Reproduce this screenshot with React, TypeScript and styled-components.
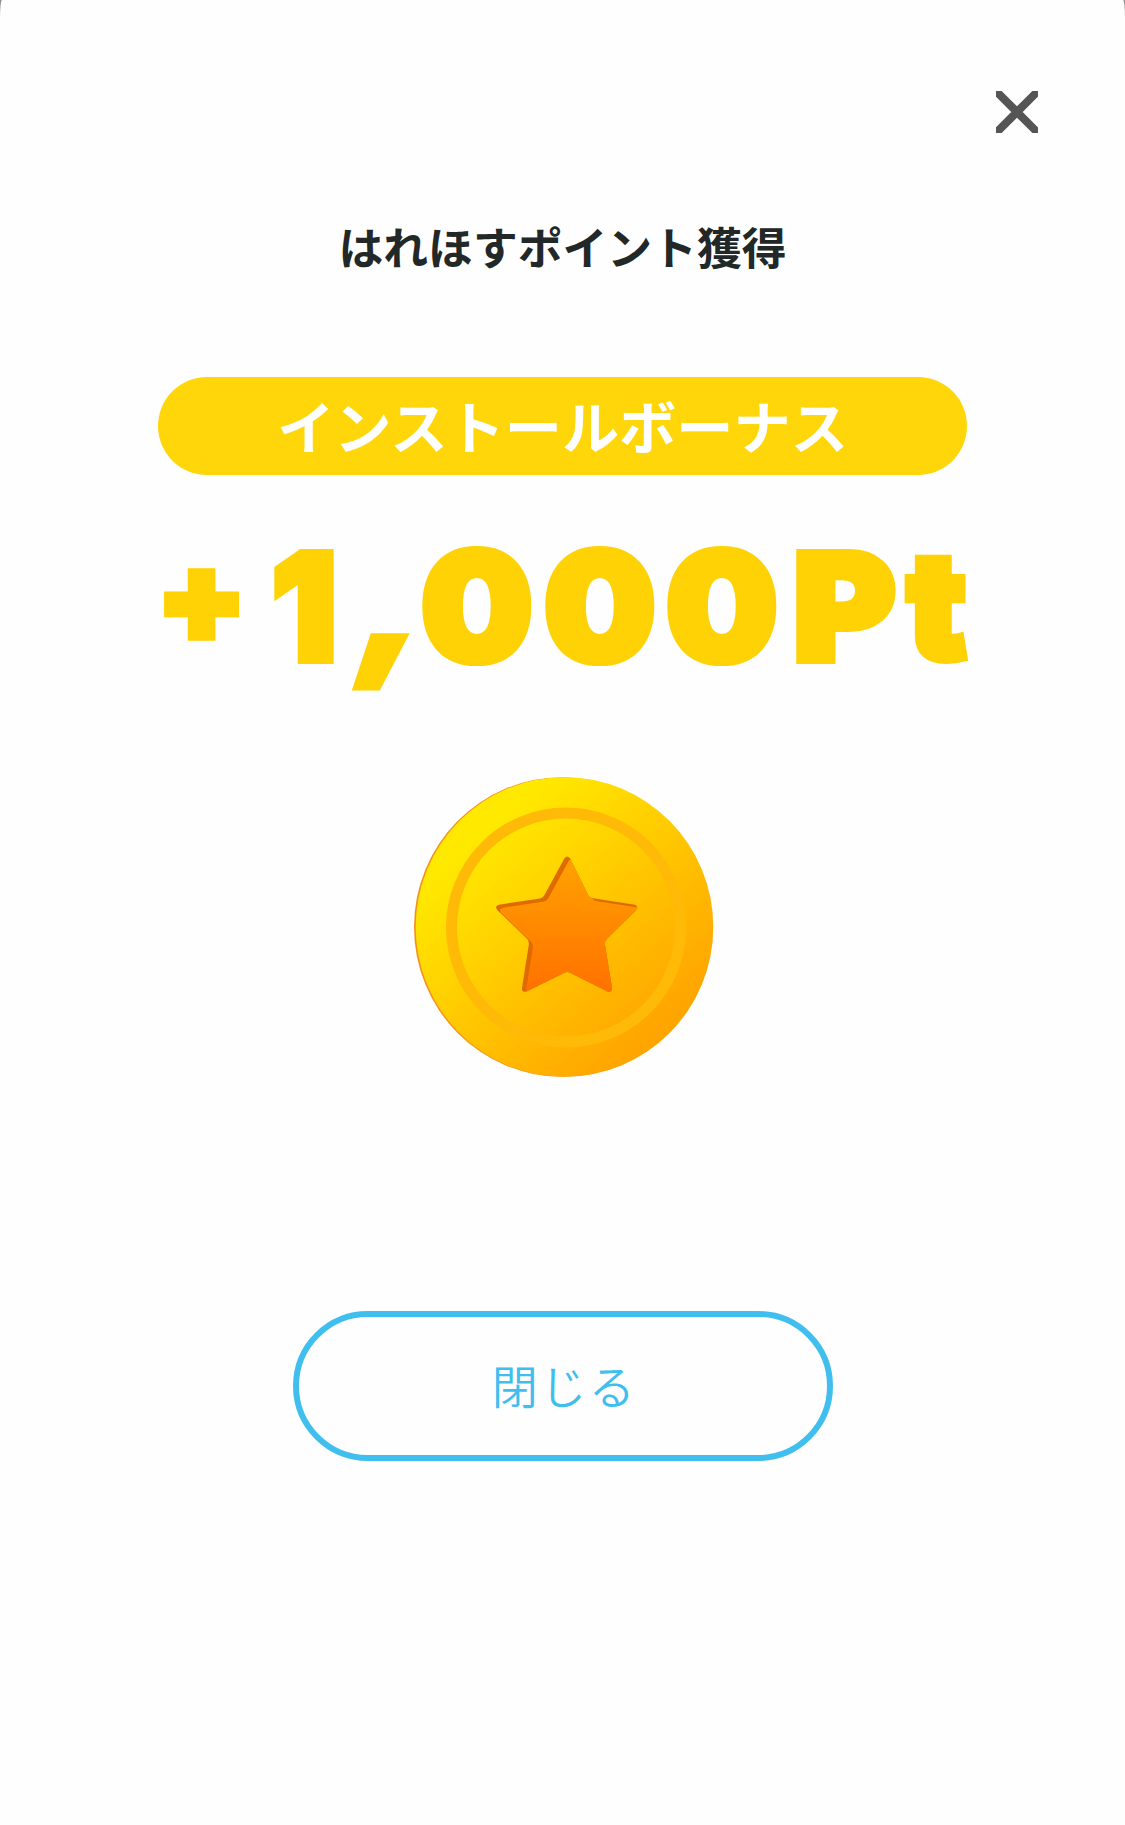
import React from "react";
import styled, { createGlobalStyle } from "styled-components";

const GlobalStyle = createGlobalStyle`
  body { margin: 0; background: #8c8c8c; }
  * { box-sizing: border-box; }
`;

const Sheet = styled.main`
  display: flex;
  flex-direction: column;
  align-items: center;
  width: 1125px;
  height: 1825px;
  overflow: hidden;
  background: #fefefe;
  border-radius: 2px 2px 0 0 / 18px 18px 0 0;
  font-family: "Noto Sans CJK JP", sans-serif;
`;

const Header = styled.header`
  display: flex;
  justify-content: flex-end;
  width: 100%;
  padding: 91px 87px 0 0;
`;

const CloseIconButton = styled.button`
  display: block;
  width: 42px;
  height: 42px;
  padding: 0;
  border: 0;
  background: none;
  svg { display: block; }
`;

const Title = styled.h1`
  margin: 81px 0 0;
  height: 64px;
  line-height: 64px;
  font-size: 44.8px;
  font-weight: 700;
  color: #222827;
  white-space: nowrap;
`;

const BonusLabel = styled.div`
  display: flex;
  align-items: center;
  justify-content: center;
  width: 809px;
  height: 98px;
  margin-top: 99px;
  border-radius: 49px;
  background: #ffd60a;
  color: #fff;
  font-size: 57.2px;
  font-weight: 700;
  line-height: 94px;
  padding-bottom: 4px;
  white-space: nowrap;
`;

const Points = styled.div`
  display: flex;
  width: 809px;
  height: 160px;
  margin-top: 52px;
  font-family: Inter, sans-serif;
  font-weight: 900;
  font-size: 147px;
  line-height: 160px;
  color: #ffd205;
  -webkit-text-stroke: 8px #ffd205;
`;

const Glyph = styled.span<{
  $w: number;
  $x?: number;
  $y?: number;
  $sx?: number;
  $sy?: number;
  $skew?: number;
}>`
  display: block;
  flex: none;
  width: ${(p) => p.$w}px;
  white-space: pre;
  transform-origin: 0 133.5px;
  transform: translate(${(p) => p.$x ?? 0}px, ${(p) => p.$y ?? 0}px)
    skewX(${(p) => p.$skew ?? 0}deg)
    scale(${(p) => p.$sx ?? 1}, ${(p) => p.$sy ?? 1});
`;

const CoinFrame = styled.div`
  width: 300px;
  height: 300px;
  margin: 90px 0 0 2px;
  svg { display: block; }
`;

const CloseButton = styled.button`
  width: 540px;
  height: 150px;
  margin-top: 234px;
  padding: 0 0 4px 4px;
  border: 6px solid #40bfee;
  border-radius: 75px;
  background: none;
  color: #40bfee;
  font-family: "Noto Sans CJK JP", sans-serif;
  font-size: 46px;
  font-weight: 350;
  letter-spacing: 2.5px;
  line-height: 134px;
`;

const STAR =
  "M150.5 80.5Q153 77 156 80.5L174.5 118Q176 120 179 120.5L221 127Q225 129 222 132.5L193 161Q190.5 163.5 191 167L198 210Q198 215.500 193 213.500L156 195Q153.300 193.500 150.500 195L113 213.500Q107.500 215.500 108 210L114.800 167Q115.300 163.500 113 161L83.500 132.500Q80 128 85 127L126 120.700Q128.500 120 130 118Z";

function Coin() {
  return (
    <svg width="300" height="300" viewBox="0 0 300 300">
      <defs>
        <linearGradient id="face" gradientUnits="userSpaceOnUse" x1="65" y1="60" x2="240" y2="255">
          <stop offset="0" stopColor="#ffe900" />
          <stop offset="1" stopColor="#ffa500" />
        </linearGradient>
        <linearGradient id="star" x1="0" y1="0" x2="0" y2="1">
          <stop offset="0" stopColor="#ffa200" />
          <stop offset="1" stopColor="#ff7000" />
        </linearGradient>
        <clipPath id="starClip"><path d={STAR} /></clipPath>
      </defs>
      <ellipse cx="148.500" cy="150" rx="148.500" ry="149.800" fill="#f5921d" />
      <ellipse cx="150.500" cy="150" rx="148.800" ry="149.800" fill="url(#face)" />
      <circle cx="152" cy="150.500" r="114.500" fill="url(#face)" stroke="#ffba08" strokeWidth="11" />
      <g transform="translate(0 0.7)">
        <path d={STAR} fill="#df6a00" />
        <g clipPath="url(#starClip)">
          <path d={STAR} fill="url(#star)" transform="translate(4 3)" />
        </g>
      </g>
    </svg>
  );
}

export default function App() {
  return (
    <>
      <GlobalStyle />
      <Sheet>
        <Header>
          <CloseIconButton aria-label="閉じる">
            <svg width="42" height="42" viewBox="0 0 42 42">
              <path d="M3 3L39 39M39 3L3 39" stroke="#555" strokeWidth="8" strokeLinecap="square" />
            </svg>
          </CloseIconButton>
        </Header>
        <Title>はれほすポイント獲得</Title>
        <BonusLabel>インストールボーナス</BonusLabel>
        <Points>
          <Glyph $w={109} $x={-1.2} $y={-19} $sx={0.88} $sy={0.85}>+</Glyph>
          <Glyph $w={84} $x={5} $sx={0.97}>1</Glyph>
          <Glyph $w={65} $x={4} $y={-4.5} $sx={1.07} $sy={1.03} $skew={-11}>,</Glyph>
          <Glyph $w={122.6} $x={5.3} $y={1} $sx={1.063} $sy={1.02}>0</Glyph>
          <Glyph $w={122.6} $x={5.3} $y={1} $sx={1.063} $sy={1.02}>0</Glyph>
          <Glyph $w={122.6} $x={5.3} $y={1} $sx={1.063} $sy={1.02}>0</Glyph>
          <Glyph $w={116} $x={9.3} $sx={1.058}>P</Glyph>
          <Glyph $w={67} $x={7.5} $y={-1} $sy={1.01}>t</Glyph>
        </Points>
        <CoinFrame><Coin /></CoinFrame>
        <CloseButton>閉じる</CloseButton>
      </Sheet>
    </>
  );
}
